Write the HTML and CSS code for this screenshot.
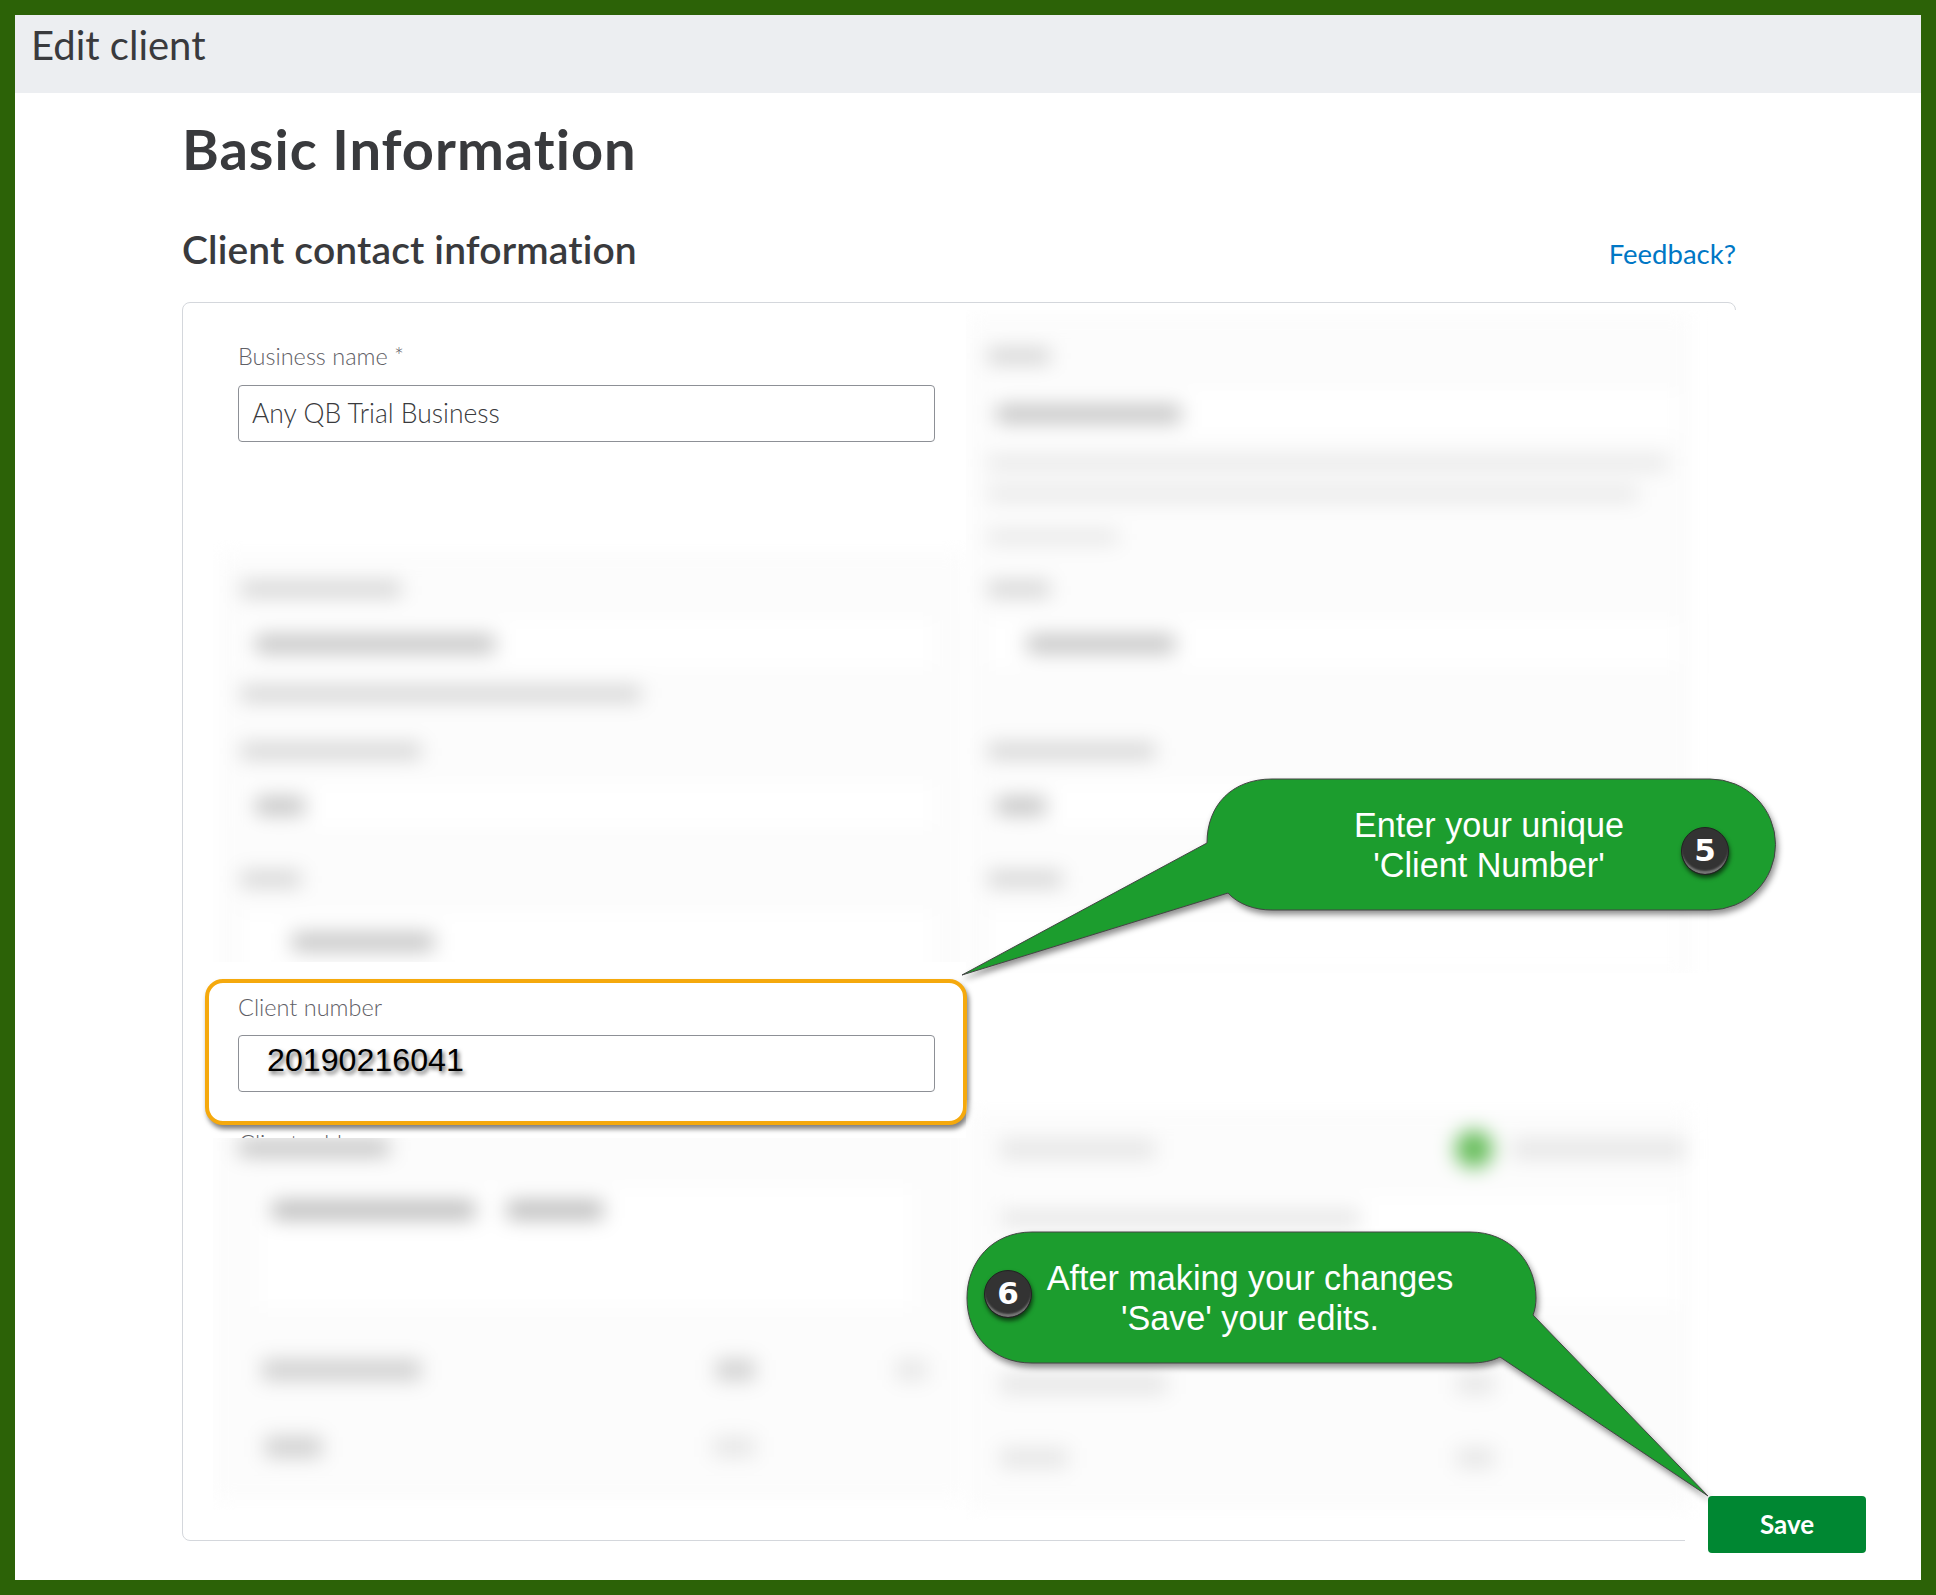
FILE: index.html
```html
<!DOCTYPE html>
<html lang="en">
<head>
<meta charset="utf-8">
<title>Edit client</title>
<link rel="stylesheet" href="styles.css">
</head>
<body>
<div class="frame">
  <header class="topbar">Edit client</header>
  <main class="main">
    <h1 class="title">Basic Information</h1>
    <div class="section-head">
      <h2 class="subtitle">Client contact information</h2>
      <a class="feedback">Feedback?</a>
    </div>
    <section class="card">
      <div class="col-left">
        <div class="field">
          <div class="label">Business name *</div>
          <div class="input">Any QB Trial Business</div>
        </div>
        <div class="sheet sheet-a">
          <div class="blur blur-a">
            <div class="b-label w160"></div>
            <div class="b-input h59"><div class="b-text w240"></div></div>
            <div class="b-label b-help w400"></div>
            <div class="b-label b-l2 w180"></div>
            <div class="b-input h55 b-i2"><div class="b-text w50"></div></div>
            <div class="b-label b-l3 w60"></div>
            <div class="b-input h70 b-i3"><div class="b-text b-indent w142"></div></div>
          </div>
        </div>
        <div class="highlight">
          <div class="label">Client number</div>
          <div class="input input-number">20190216041</div>
        </div>
        <div class="sliver"><span class="sliver-text">Client address</span></div>
        <div class="sheet sheet-b">
          <div class="blur blur-b">
            <div class="b-label w150 dark"></div>
            <div class="b-area">
              <div class="b-text w203 dark"></div>
              <div class="b-text w96 dark"></div>
            </div>
            <div class="b-row b-row-1">
              <div class="b-cell w159"></div>
              <div class="b-cell w39 gap295"></div>
              <div class="b-cell w31 gap141 faint"></div>
            </div>
            <div class="b-row b-row-2">
              <div class="b-cell w57"></div>
              <div class="b-cell w42 gap391 faint"></div>
            </div>
          </div>
        </div>
      </div>
      <div class="col-right">
        <div class="sheet sheet-c">
          <div class="blur blur-c">
            <div class="b-label w62 first"></div>
            <div class="b-input h57 b-i4"><div class="b-text w185"></div></div>
            <div class="b-label b-d1 w680 faint"></div>
            <div class="b-label b-d2 w650 faint"></div>
            <div class="b-label b-d3 w130 faint"></div>
            <div class="b-label b-l5 w62"></div>
            <div class="b-input h59 b-i5"><div class="b-text b-indent2 w148"></div></div>
            <div class="b-label b-l6 w167"></div>
            <div class="b-input h55 b-i2"><div class="b-text w50"></div></div>
            <div class="b-label b-l3 w74"></div>
            <div class="b-input h70 b-i3"></div>
          </div>
        </div>
        <div class="sheet sheet-d">
          <div class="blur blur-d">
            <div class="b-row b-row-3">
              <div class="b-cell w155 faint"></div>
              <div class="b-dot"></div>
              <div class="b-cell w173 faint"></div>
            </div>
            <div class="b-area b-area-r"><div class="b-text w358 faint"></div></div>
            <div class="b-row b-row-4">
              <div class="b-cell w167 faint"></div>
              <div class="b-cell w37 gap290 faint"></div>
            </div>
            <div class="b-row b-row-5">
              <div class="b-cell w68 faint"></div>
              <div class="b-cell w37 gap389 faint"></div>
            </div>
          </div>
        </div>
      </div>
    </section>
  </main>
</div>

<div class="callout callout-one">
  <svg class="callout-shape" width="820" height="200" viewBox="960 777 820 200" aria-hidden="true">
    <path d="M1272 779H1710A65.5 65.5 0 0 1 1710 910H1272C1254 910 1238 904 1228 893L962 975L1207 843C1207 805 1232 779 1272 779Z"/>
  </svg>
  <div class="callout-text text-one">Enter your unique<br>'Client Number'</div>
  <div class="badge badge-five">5</div>
</div>

<div class="callout callout-two">
  <svg class="callout-shape" width="750" height="270" viewBox="964 1230 750 270" aria-hidden="true">
    <path d="M1032 1232H1470C1510 1232 1536 1262 1536 1298C1536 1304 1535 1310 1533 1315L1708 1496L1500 1357C1492 1361 1482 1363 1470 1363H1032C992 1363 967 1335 967 1298C967 1262 992 1232 1032 1232Z"/>
  </svg>
  <div class="callout-text text-two">After making your changes<br>'Save' your edits.</div>
  <div class="badge badge-six">6</div>
</div>

<button class="save">Save</button>
</body>
</html>
```
FILE: styles.css
```css
* { box-sizing: border-box; }
html, body { margin: 0; padding: 0; }
body {
  position: relative;
  width: 1936px;
  height: 1595px;
  overflow: hidden;
  font-family: Lato, "Liberation Sans", sans-serif;
  font-variant-ligatures: none;
  color: #393a3d;
  background: #fff;
}
.frame {
  width: 1936px;
  height: 1595px;
  border: 15px solid #2c6207;
  background: #fff;
  overflow: hidden;
}
.topbar {
  height: 78px;
  background: #eceef1;
  padding: 6px 0 0 16px;
  font-size: 40px;
  line-height: 48px;
  font-weight: 400;
}
.main { padding: 0 185px 0 167px; }
.title {
  margin: 26px 0 0;
  font-size: 56px;
  line-height: 60px;
  font-weight: 700;
  letter-spacing: 1px;
}
.section-head {
  display: flex;
  justify-content: space-between;
  align-items: flex-end;
  margin-top: 50px;
}
.subtitle {
  margin: 0;
  font-size: 39px;
  line-height: 40px;
  font-weight: 600;
  letter-spacing: .15px;
}
.feedback {
  color: #0077c5;
  font-size: 27.5px;
  line-height: 36px;
  margin-bottom: -3px;
}
.card {
  position: relative;
  display: flex;
  height: 1239px;
  margin-top: 33px;
  border: 1px solid #d4d7dc;
  border-radius: 8px;
}
.card::after {
  content: "";
  position: absolute;
  right: -2px;
  bottom: -2px;
  width: 52px;
  height: 12px;
  background: #fff;
}
.col-left { width: 783px; flex: none; }
.col-right {
  flex: 1;
  min-width: 0;
  margin: 7px -2px 0 0;
  background: #fff;
}
.field { padding: 39px 0 0 55px; }
.label {
  font-size: 23.5px;
  line-height: 28px;
  font-weight: 300;
  color: #5f6066;
}
.input {
  width: 697px;
  height: 57px;
  margin-top: 15px;
  padding-left: 13px;
  border: 1px solid #8d9096;
  border-radius: 4px;
  background: #fff;
  font-size: 26.5px;
  line-height: 54px;
  font-weight: 300;
}

/* blurred areas */
.sheet { overflow: hidden; background: #fff; }
.sheet-a { height: 422px; margin: 98px 0 0 30px; }
.sheet-b { height: 372px; margin-left: 30px; }
.sheet-c { height: 663px; }
.sheet-d { height: 420px; margin-top: 127px; }
.blur { filter: blur(10px); background: #fcfcfc; }
.blur-a { padding: 30px 0 40px 0; margin: 12px 0 0 6px; }
.blur-b { margin: -20px 0 0; padding-top: 23px; height: 382px; }
.blur-c { margin: 4px 45px 0 0; padding-top: 35px; }
.blur-d { margin: 10px 45px 0 0; padding-top: 11px; height: 400px; }

.b-label { height: 14px; margin-left: 22px; background: #cfcfcf; }
.blur-b .b-label { margin-left: 26px; }
.blur-c .b-label { margin-left: 22px; }
.b-input {
  display: flex;
  align-items: center;
  width: 703px;
  margin: 18px 0 0 16px;
  padding-left: 18px;
  background: #fff;
  border: 2px solid #f5f5f5;
}
.blur-c .b-input { margin-left: 15px; padding-left: 13px; }
.b-text { height: 18px; background: #c2c2c2; }
.b-indent { margin-left: 37px; }
.b-indent2 { margin-left: 31px; }
.b-help { margin-top: 14px; }
.b-l2 { margin-top: 43px; }
.b-l6 { margin-top: 71px; }
.b-i2 { margin-top: 20px; }
.b-l3 { margin-top: 39px; }
.b-i3 { margin-top: 21px; }
.b-i4 { margin-top: 22px; }
.b-i5 { margin-top: 18px; }
.b-d1 { margin-top: 14px; }
.b-d2 { margin-top: 17px; }
.b-d3 { margin-top: 29px; }
.b-l5 { margin-top: 38px; }
.h55 { height: 55px; }
.h57 { height: 57px; }
.h59 { height: 59px; }
.h70 { height: 70px; }

.b-area {
  display: flex;
  gap: 32px;
  height: 130px;
  width: 663px;
  margin: 28px 0 0 41px;
  padding: 16px 0 0 16px;
  background: #fff;
  border: 2px solid #f7f7f7;
}
.b-area-r { width: 685px; height: 120px; margin: 24px 0 0 34px; padding-left: 0; }
.b-row { display: flex; align-items: center; }
.b-row-1 { margin: 47px 0 0 49px; }
.b-row-2 { margin: 57px 0 0 52px; }
.b-row-3 { margin: 10px 0 0 34px; height: 36px; }
.b-row-4 { margin: 63px 0 0 34px; }
.b-row-5 { margin: 54px 0 0 34px; }
.b-cell { height: 20px; background: #cecece; }
.b-dot {
  width: 38px;
  height: 38px;
  margin: 0 19px 0 300px;
  border-radius: 50%;
  background: #66bd5a;
}
.dark { background: #b8b8b8; }
.faint { background: #e6e6e6; }
.w50 { width: 50px; }
.w57 { width: 57px; }
.w60 { width: 60px; }
.w31 { width: 31px; }
.w37 { width: 37px; }
.w39 { width: 39px; }
.w42 { width: 42px; }
.w62 { width: 62px; }
.w68 { width: 68px; }
.w74 { width: 74px; }
.w96 { width: 96px; }
.w130 { width: 130px; }
.w142 { width: 142px; }
.w148 { width: 148px; }
.w150 { width: 150px; }
.w155 { width: 155px; }
.w159 { width: 159px; }
.w160 { width: 160px; }
.w167 { width: 167px; }
.w173 { width: 173px; }
.w180 { width: 180px; }
.w185 { width: 185px; }
.w203 { width: 203px; }
.w240 { width: 240px; }
.w358 { width: 358px; }
.w400 { width: 400px; }
.w650 { width: 650px; }
.w680 { width: 680px; }
.gap141 { margin-left: 141px; }
.gap290 { margin-left: 290px; }
.gap295 { margin-left: 295px; }
.gap389 { margin-left: 389px; }
.gap391 { margin-left: 391px; }

/* highlighted field */
.highlight {
  position: relative;
  width: 762px;
  height: 146px;
  margin: 17px 0 0 22px;
  padding: 10px 0 0 29px;
  border: 4px solid #f5a90d;
  border-radius: 18px;
  background: #fff;
  box-shadow: 2px 4px 5px rgba(0, 0, 0, .5);
}
.highlight .input { margin-top: 14px; }
.input-number {
  padding-left: 28px;
  color: #000;
  font-family: "Liberation Sans", Arial, sans-serif;
  font-size: 32.2px;
  font-weight: 400;
  line-height: 48px;
  text-shadow: 2px 3px 4px rgba(0, 0, 0, .6);
}
.sliver {
  height: 4px;
  margin: 9px 0 0 56px;
  overflow: hidden;
  font-size: 23.5px;
  font-weight: 300;
  line-height: 28px;
  color: #5f6066;
}
.sliver-text { display: block; margin-top: -5px; }

/* callouts */
.callout { position: absolute; }
.callout-one { left: 960px; top: 777px; width: 820px; height: 200px; }
.callout-two { left: 964px; top: 1230px; width: 750px; height: 270px; }
.callout-shape {
  display: block;
  overflow: visible;
  filter: drop-shadow(2px 4px 3px rgba(0, 0, 0, .45));
}
.callout-shape path { fill: #1c9d2e; stroke: #444; stroke-width: 1; }
.callout-text {
  position: absolute;
  width: 500px;
  text-align: center;
  color: #fff;
  font-family: "Liberation Sans", Arial, sans-serif;
  font-size: 34.2px;
  line-height: 40px;
}
.text-one { left: 279px; top: 28px; }
.text-two { left: 36px; top: 28px; }
.badge {
  position: absolute;
  width: 48px;
  height: 48px;
  border-radius: 50%;
  border: 1px solid #222;
  background: #333;
  color: #fff;
  font-family: "DejaVu Sans", sans-serif;
  font-weight: 700;
  font-size: 31px;
  line-height: 44px;
  text-align: center;
  box-shadow: inset 0 -4px 2px -1px #777, 1px 3px 4px rgba(0, 0, 0, .6);
}
.badge-five { left: 721px; top: 50px; }
.badge-six { left: 20px; top: 40px; }

.save {
  position: absolute;
  left: 1708px;
  top: 1496px;
  width: 158px;
  height: 57px;
  padding: 0 0 2px;
  border: 0;
  border-radius: 4px;
  background: #008732;
  color: #fff;
  font-family: Lato, sans-serif;
  font-weight: 700;
  font-size: 26px;
}
```
